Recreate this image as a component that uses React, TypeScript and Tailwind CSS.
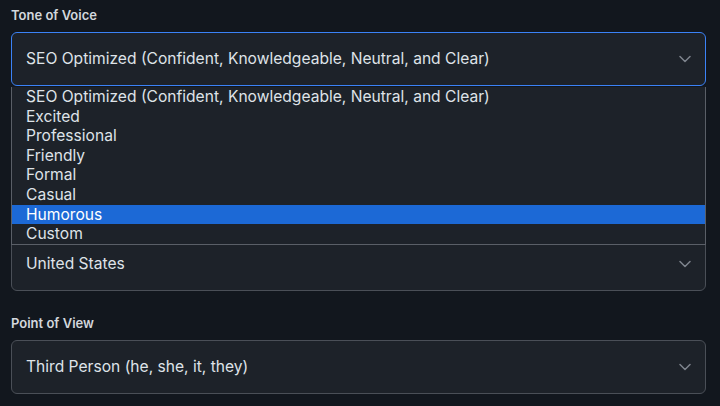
import React from "react";

const Chevron = () => (
  <svg width="12" height="8" viewBox="0 0 12 8" fill="none" className="shrink-0">
    <path d="M1 1.5L6 6.5L11 1.5" stroke="#7d838c" strokeWidth="1.5" strokeLinecap="round" strokeLinejoin="round" />
  </svg>
);

const options = [
  "SEO Optimized (Confident, Knowledgeable, Neutral, and Clear)",
  "Excited",
  "Professional",
  "Friendly",
  "Formal",
  "Casual",
  "Humorous",
  "Custom",
];

function Field({
  label,
  value,
  focused,
  children,
}: {
  label: string;
  value: string;
  focused?: boolean;
  children?: React.ReactNode;
}) {
  return (
    <div className="relative flex flex-col">
      <div className="h-[20px] text-[13px] leading-[20px] font-semibold text-[#d3d7dd]">{label}</div>
      <div
        className={`mt-[7px] h-[54px] flex items-center justify-between rounded-[6px] border bg-[#1d2229] pl-[14px] pr-[14px] ${
          focused ? "border-[#3b82f6]" : "border-[#4a4f57]"
        }`}
      >
        <span className="text-[15.6px] text-[#dfe3e8]">{value}</span>
        <Chevron />
      </div>
      {children}
    </div>
  );
}

export default function App() {
  return (
    <div
      className="w-[720px] h-[406px] overflow-hidden bg-[#12171e] pl-[11px] pr-[14px] pt-[5px]"
      style={{ fontFamily: "Inter, 'Noto Sans', sans-serif" }}
    >
      <div className="flex flex-col gap-[21.5px]">
        <Field label="Tone of Voice" value="SEO Optimized (Confident, Knowledgeable, Neutral, and Clear)" focused>
          <div className="absolute left-[0px] right-[0px] top-[82px] z-10 border-x border-b border-[#5a5f67] bg-[#1d2229]">
            {options.map((o) => (
              <div
                key={o}
                className={`h-[19.6px] leading-[19.6px] pl-[14px] text-[15.6px] ${
                  o === "Humorous" ? "bg-[#1c69d6] text-white" : "text-[#dfe3e8]"
                }`}
              >
                {o}
              </div>
            ))}
          </div>
        </Field>
        <Field label="" value="" />
        <Field label="" value="United States" />
        <Field label="Point of View" value="Third Person (he, she, it, they)" />
      </div>
    </div>
  );
}
